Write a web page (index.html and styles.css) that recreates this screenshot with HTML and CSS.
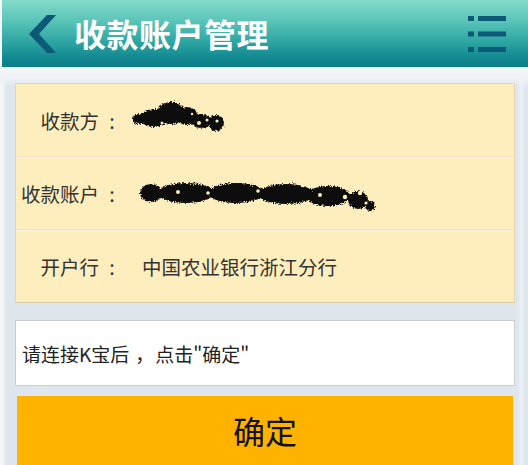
FILE: index.html
```html
<!DOCTYPE html>
<html lang="zh-CN">
<head>
<meta charset="utf-8">
<title>收款账户管理</title>
<link rel="stylesheet" href="styles.css">
</head>
<body>
<div class="page">
  <svg class="defs" width="0" height="0">
    <filter id="rough" x="-10%" y="-30%" width="120%" height="160%">
      <feTurbulence type="fractalNoise" baseFrequency="0.9" numOctaves="2" seed="3" result="noise"/>
      <feDisplacementMap in="SourceGraphic" in2="noise" scale="5" xChannelSelector="R" yChannelSelector="G"/>
    </filter>
  </svg>
  <header class="header">
    <svg class="back" width="30" height="40" viewBox="0 0 30 40">
      <polygon points="20,1 29,1 12,20 29,39 20,39 2,20" fill="#0d5a78"/>
    </svg>
    <h1 class="title">收款账户管理</h1>
    <svg class="menu" width="40" height="40" viewBox="0 0 40 40">
      <g fill="#0d5a78">
        <rect x="0" y="2" width="6" height="5"/>
        <rect x="10" y="2" width="28" height="5"/>
        <rect x="0" y="17.5" width="6" height="5"/>
        <rect x="10" y="17.5" width="28" height="5"/>
        <rect x="0" y="33" width="6" height="5"/>
        <rect x="10" y="33" width="28" height="5"/>
      </g>
    </svg>
  </header>
  <main class="main">
    <section class="card">
      <div class="row">
        <span class="label">收款方<span class="colon">:</span></span>
        <svg class="blot blot-name" width="100" height="36" viewBox="0 0 100 36">
          <g fill="#111" filter="url(#rough)">
            <ellipse cx="10" cy="20" rx="7" ry="5"/>
            <ellipse cx="25" cy="19" rx="14" ry="9"/>
            <ellipse cx="42" cy="14" rx="14" ry="11"/>
            <ellipse cx="58" cy="17" rx="11" ry="9"/>
            <ellipse cx="72" cy="22" rx="10" ry="7"/>
            <ellipse cx="87" cy="24" rx="8" ry="8"/>
          </g>
          <g fill="#fdeebd">
            <circle cx="70" cy="24" r="2"/>
            <circle cx="78" cy="21" r="1.5"/>
            <circle cx="33" cy="24" r="1.5"/>
            <circle cx="63" cy="15" r="1.2"/>
            <circle cx="88" cy="22" r="1.6"/>
          </g>
        </svg>
      </div>
      <div class="row">
        <span class="label">收款账户<span class="colon">:</span></span>
        <svg class="blot blot-acct" width="242" height="34" viewBox="0 0 242 34">
          <g fill="#111" filter="url(#rough)">
            <ellipse cx="13" cy="14" rx="11" ry="9"/>
            <ellipse cx="48" cy="14" rx="28" ry="10"/>
            <ellipse cx="98" cy="14" rx="28" ry="10"/>
            <ellipse cx="148" cy="15" rx="28" ry="10"/>
            <ellipse cx="190" cy="17" rx="22" ry="10"/>
            <ellipse cx="220" cy="21" rx="10" ry="9"/>
            <ellipse cx="232" cy="27" rx="5" ry="5"/>
          </g>
          <g fill="#fdeebd">
            <circle cx="40" cy="13" r="2"/>
            <circle cx="70" cy="14" r="1.8"/>
            <circle cx="120" cy="12" r="1.8"/>
            <circle cx="182" cy="16" r="2"/>
            <circle cx="207" cy="18" r="2.2"/>
            <circle cx="222" cy="14" r="2.2"/>
            <circle cx="228" cy="24" r="1.6"/>
          </g>
        </svg>
      </div>
      <div class="row">
        <span class="label">开户行<span class="colon">:</span></span>
        <span class="value">中国农业银行浙江分行</span>
      </div>
    </section>
    <section class="notice">请连接K宝后<span class="punct">，</span>点击"确定"</section>
    <button class="confirm" type="button">确定</button>
  </main>
</div>
</body>
</html>
```

FILE: styles.css
```css
html, body {
  margin: 0;
  padding: 0;
}
body {
  width: 528px;
  height: 465px;
  overflow: hidden;
  background: #dfe6ee;
  font-family: "Noto Sans CJK SC", "Noto Sans", "DejaVu Sans", sans-serif;
  color: #333;
}
.defs {
  position: absolute;
  width: 0;
  height: 0;
}
.page {
  width: 528px;
  height: 465px;
  display: flex;
  flex-direction: column;
  background: linear-gradient(to right, #f4f6f8 0, #f4f6f8 3px, #dfe6ee 6px, #dfe6ee 518px, #eef2f6 521px, #dfe6ee 525px);
}
.header {
  height: 67px;
  margin-left: 2px;
  flex: none;
  display: flex;
  align-items: center;
  background: linear-gradient(to bottom, #84dac9 0%, #5cc6b9 30%, #2ea6a3 62%, #138a92 85%, #0b7d88 100%);
}
.back {
  margin-left: 25px;
  flex: none;
}
.title {
  margin: 0 0 2px 17px;
  font-size: 32px;
  font-weight: bold;
  color: #fff;
  letter-spacing: 0.5px;
  line-height: 1;
  flex: 1;
}
.menu {
  margin-right: 20px;
  flex: none;
}
.main {
  flex: 1;
  padding: 16px 13px 0 15px;
  display: flex;
  flex-direction: column;
  background: linear-gradient(to bottom, #f5f7f9 0, #eef2f5 12px, rgba(223,230,238,0) 20px);
}
.card {
  background: #feeebd;
  border: 1px solid #e2d6b3;
  border-bottom-color: #d8cba8;
}
.row {
  height: 72px;
  display: flex;
  align-items: center;
  border-bottom: 1px solid #efdfca;
  box-shadow: 0 1px 0 #fff6df;
}
.row:last-child {
  border-bottom: none;
  box-shadow: none;
}
.label {
  width: 109px;
  text-align: right;
  font-size: 19.5px;
  flex: none;
}
.colon {
  display: inline-block;
  width: 26px;
  text-align: center;
  font-size: 20px;
}
.punct {
  display: inline-block;
  width: 26px;
  padding-left: 6px;
  box-sizing: border-box;
}
.value {
  margin-left: 17px;
  font-size: 19.5px;
}
.blot-name {
  margin-left: 4px;
  margin-top: -6px;
}
.blot-acct {
  margin-left: 13px;
  margin-top: 6px;
}
.notice {
  margin-top: 17px;
  height: 64px;
  background: #fff;
  border: 1px solid #c9ccd0;
  display: flex;
  align-items: center;
  padding-left: 6px;
  font-size: 19px;
  color: #222;
}
.confirm {
  margin: 10px 2px 0 2px;
  height: 75px;
  border: none;
  background: #ffb300;
  font-family: inherit;
  font-size: 32px;
  color: #111;
  padding: 0 0 8px 0;
}
```
